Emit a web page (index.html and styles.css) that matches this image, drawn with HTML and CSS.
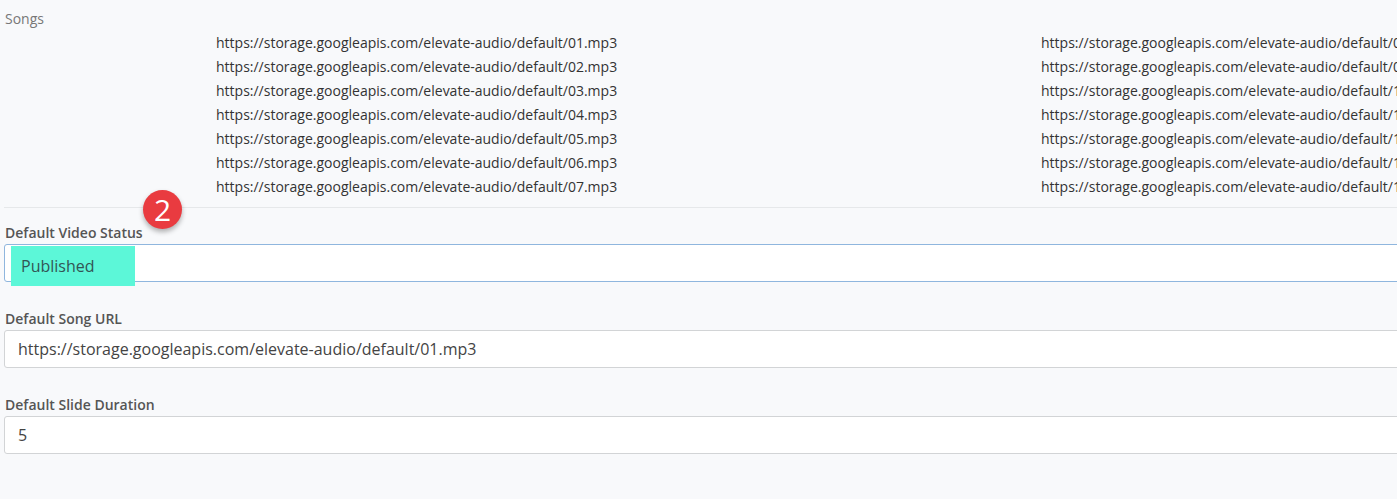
FILE: index.html
```html
<!DOCTYPE html>
<html lang="en">
<head>
    <meta charset="UTF-8">
    <title>Settings</title>
    <link rel="stylesheet" href="styles.css">
</head>
<body>
    <div class="section songs">
        <div class="songsLabel">Songs</div>
        <div class="songList">
            <div class="songCol">
                <div>https://storage.googleapis.com/elevate-audio/default/01.mp3</div>
                <div>https://storage.googleapis.com/elevate-audio/default/02.mp3</div>
                <div>https://storage.googleapis.com/elevate-audio/default/03.mp3</div>
                <div>https://storage.googleapis.com/elevate-audio/default/04.mp3</div>
                <div>https://storage.googleapis.com/elevate-audio/default/05.mp3</div>
                <div>https://storage.googleapis.com/elevate-audio/default/06.mp3</div>
                <div>https://storage.googleapis.com/elevate-audio/default/07.mp3</div>
            </div>
            <div class="songCol">
                <div>https://storage.googleapis.com/elevate-audio/default/08.mp3</div>
                <div>https://storage.googleapis.com/elevate-audio/default/09.mp3</div>
                <div>https://storage.googleapis.com/elevate-audio/default/10.mp3</div>
                <div>https://storage.googleapis.com/elevate-audio/default/11.mp3</div>
                <div>https://storage.googleapis.com/elevate-audio/default/12.mp3</div>
                <div>https://storage.googleapis.com/elevate-audio/default/13.mp3</div>
                <div>https://storage.googleapis.com/elevate-audio/default/14.mp3</div>
            </div>
        </div>
    </div>

    <div class="field status">
        <span class="badge">2</span>
        <label>Default Video Status</label>
        <div class="input focused"><span class="highlight">Published</span></div>
    </div>

    <div class="field">
        <label>Default Song URL</label>
        <div class="input">https://storage.googleapis.com/elevate-audio/default/01.mp3</div>
    </div>

    <div class="field">
        <label>Default Slide Duration</label>
        <div class="input">5</div>
    </div>
</body>
</html>
```
FILE: styles.css
```css
* {
    margin: 0;
    padding: 0;
    box-sizing: border-box;
}
html, body {
    overflow: hidden;
}
body {
    font-family: 'Open Sans', 'Noto Sans', Arial, sans-serif;
    background-color: #f8f9fb;
    color: #333;
    width: 1430px;
    padding: 0 0 0 4px;
}
.songs {
    padding-top: 9px;
    border-bottom: 1px solid #e6e8ea;
    padding-bottom: 8px;
}
.songsLabel {
    font-size: 14px;
    color: #777;
    padding-left: 1px;
    line-height: 20px;
}
.songList {
    display: grid;
    grid-template-columns: 825px 825px;
    padding-left: 212px;
    margin-top: 2px;
}
.songCol div {
    font-size: 14px;
    line-height: 24px;
    color: #333;
    white-space: nowrap;
}
.field {
    position: relative;
    padding-top: 27px;
}
.field.status {
    padding-top: 15px;
}
label {
    display: block;
    font-size: 14px;
    font-weight: 600;
    color: #555;
    line-height: 19px;
    padding-left: 1px;
    margin-bottom: 2px;
}
.input {
    display: flex;
    align-items: center;
    height: 38px;
    background-color: #fff;
    border: 1px solid #d2d4d6;
    border-radius: 3px;
    font-size: 16px;
    color: #444;
    padding-left: 13px;
}
.input.focused {
    border-color: #8fb6de;
    padding-left: 6px;
    align-items: stretch;
}
.highlight {
    display: flex;
    align-items: center;
    background-color: #5cf7d8;
    width: 124px;
    height: 40px;
    margin-top: 1px;
    padding-left: 10px;
    color: #355;
}
.badge {
    position: absolute;
    left: 139px;
    top: -18px;
    width: 39px;
    height: 39px;
    border-radius: 50%;
    background-color: #e93b40;
    color: #fff;
    font-size: 30px;
    line-height: 39px;
    text-align: center;
    box-shadow: 0 3px 5px rgba(0, 0, 0, 0.3);
}
```
